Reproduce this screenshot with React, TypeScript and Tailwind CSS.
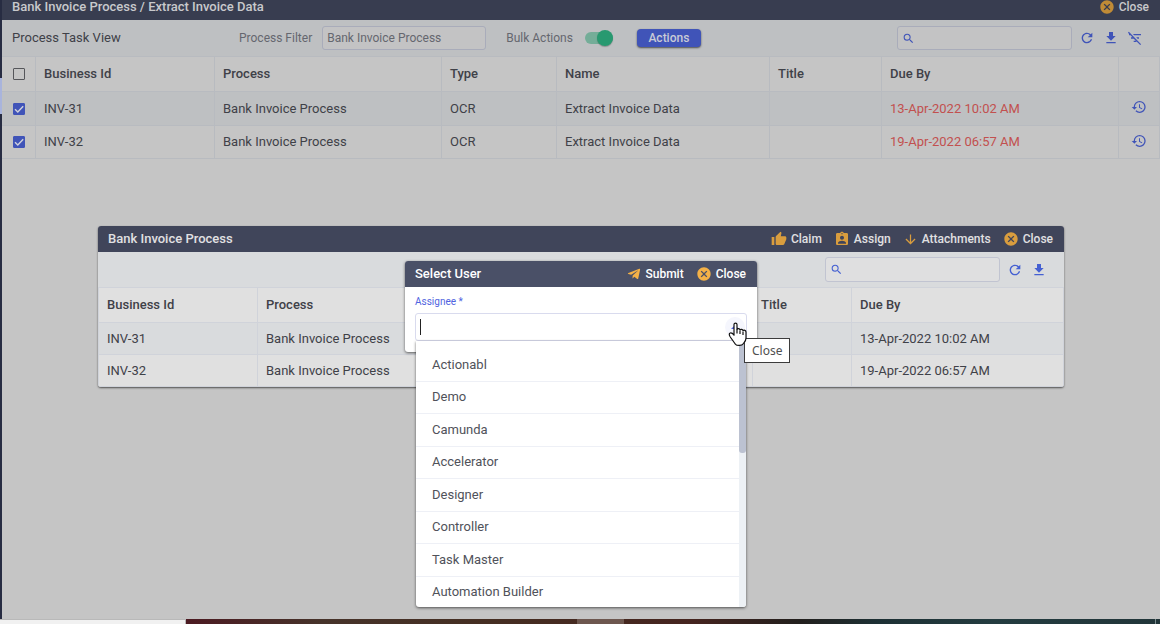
import type { ReactNode } from "react";
import {
  MdArrowDownward,
  MdAssignmentInd,
  MdCancel,
  MdFileDownload,
  MdFilterListOff,
  MdHistory,
  MdRefresh,
  MdSearch,
  MdThumbUp,
} from "react-icons/md";
import { FaTelegramPlane } from "react-icons/fa";

const tasks = [
  { id: "INV-31", process: "Bank Invoice Process", type: "OCR", name: "Extract Invoice Data", due: "13-Apr-2022 10:02 AM" },
  { id: "INV-32", process: "Bank Invoice Process", type: "OCR", name: "Extract Invoice Data", due: "19-Apr-2022 06:57 AM" },
];

const users = [
  "Actionabl",
  "Demo",
  "Camunda",
  "Accelerator",
  "Designer",
  "Controller",
  "Task Master",
  "Automation Builder",
];

function BarButton({ icon, children }: { icon: ReactNode; children: ReactNode }) {
  return (
    <button type="button" className="flex items-center gap-1 text-[12px] leading-4 font-medium">
      {icon}
      {children}
    </button>
  );
}

function RowCheckbox({ label, checked = false }: { label: string; checked?: boolean }) {
  return (
    <span className="mx-auto grid size-3 place-items-center">
      <input
        type="checkbox"
        aria-label={label}
        defaultChecked={checked}
        className="peer col-start-1 row-start-1 size-3 appearance-none rounded-[1px] border border-[#55565a] checked:border-[#4054b8] checked:bg-[#4054b8]"
      />
      <svg viewBox="0 0 12 12" className="pointer-events-none col-start-1 row-start-1 hidden size-3 peer-checked:block" aria-hidden="true">
        <path d="M2 6.2 4.8 9 10.2 3.2" fill="none" stroke="#d0d2dc" strokeWidth="1.4" />
      </svg>
    </span>
  );
}

function MainTable() {
  const cell = "border-r border-b border-[#b8bbc0] px-2";
  return (
    <table className="w-full table-fixed border-separate border-spacing-0 text-left">
      <colgroup>
        <col className="w-[34px]" />
        <col className="w-[179px]" />
        <col className="w-[227px]" />
        <col className="w-[115px]" />
        <col className="w-[213px]" />
        <col className="w-[112px]" />
        <col className="w-[237px]" />
        <col className="w-[41px]" />
      </colgroup>
      <thead>
        <tr className="h-[35px]">
          <th className="border-r border-b border-[#b8bbc0]">
            <RowCheckbox label="Select all tasks" />
          </th>
          {["Business Id", "Process", "Type", "Name", "Title", "Due By"].map((h) => (
            <th key={h} className={`${cell} font-medium`}>{h}</th>
          ))}
          <th className={cell} />
        </tr>
      </thead>
      <tbody>
        {tasks.map((t) => (
          <tr key={t.id} className="h-[34px] odd:bg-[#bec0c2] last:h-[33px]">
            <td className="border-r border-b border-[#b8bbc0]">
              <RowCheckbox label={`Select ${t.id}`} checked />
            </td>
            <td className={cell}>{t.id}</td>
            <td className={cell}>{t.process}</td>
            <td className={cell}>{t.type}</td>
            <td className={cell}>{t.name}</td>
            <td className={cell} />
            <td className={`${cell} text-[#c2504f]`}>{t.due}</td>
            <td className="border-r border-b border-[#b8bbc0] pb-[3px]">
              <button type="button" aria-label={`History of ${t.id}`} className="mx-auto block text-[#4054b8]">
                <MdHistory size={16} />
              </button>
            </td>
          </tr>
        ))}
      </tbody>
    </table>
  );
}

function ClaimDialog() {
  const cell = "border-r border-b border-[#d0d3da] px-2";
  return (
    <section className="w-[966px] max-w-full overflow-hidden rounded-[3px] bg-[#e0e0e0] shadow-[0_1px_2px_rgba(0,0,0,0.6)]">
      <header className="flex h-[26px] items-center justify-between bg-[#40455a] pr-[11px] pl-2.5 text-[#e0e0e2]">
        <h2 className="font-medium">Bank Invoice Process</h2>
        <div className="flex items-center gap-3">
          <BarButton icon={<MdThumbUp size={16} className="text-[#d99d3e]" />}>Claim</BarButton>
          <BarButton icon={<MdAssignmentInd size={16} className="text-[#d99d3e]" />}>Assign</BarButton>
          <BarButton icon={<MdArrowDownward size={15} className="text-[#d99d3e]" />}>Attachments</BarButton>
          <BarButton icon={<MdCancel size={16} className="text-[#d99d3e]" />}>Close</BarButton>
        </div>
      </header>
      <div className="flex h-[35px] items-center justify-end gap-2 bg-[#d9dbdd] pr-[17px] text-[#4560d2]">
        <label className="-mr-px flex h-[25px] w-[175px] items-center rounded-[3px] border border-[#c1c4d1] bg-[#dfdfe0] px-1">
          <MdSearch size={13} />
          <input type="search" aria-label="Search invoices" className="min-w-0 flex-1 outline-none" />
        </label>
        <button type="button" aria-label="Refresh invoices"><MdRefresh size={16} /></button>
        <button type="button" aria-label="Download invoices"><MdFileDownload size={16} /></button>
      </div>
      <table className="w-full table-fixed border-separate border-spacing-0 border-t border-l border-[#d0d3da] text-left">
        <colgroup>
          <col className="w-[159px]" />
          <col className="w-[495px]" />
          <col className="w-[99px]" />
          <col className="w-[212px]" />
        </colgroup>
        <thead>
          <tr className="h-[35px]">
            {["Business Id", "Process", "Title", "Due By"].map((h) => (
              <th key={h} className={`${cell} font-medium`}>{h}</th>
            ))}
          </tr>
        </thead>
        <tbody>
          {tasks.map((t) => (
            <tr key={t.id} className="h-8 odd:bg-[#d9dbdd]">
              <td className={cell}>{t.id}</td>
              <td className={cell}>{t.process}</td>
              <td className={cell} />
              <td className={cell}>{t.due}</td>
            </tr>
          ))}
        </tbody>
      </table>
    </section>
  );
}

function HandCursor() {
  return (
    <svg viewBox="0 0 19 25" className="absolute -top-0.5 -left-1.5 h-[25px] w-[19px]" aria-hidden="true">
      <path
        d="M6 2.5C6 .6 9 .6 9 2.5V7.500c.5-1.300 2.700-1 3 .5.7-1.200 2.600-.8 3 .7 1-1 3-.4 3 1.300V16c0 3.500-2 4.500-3 6-1 1.800-6 2-7.500.3C6 20.500 4.500 18 2 14.500c-1.200-2-.8-3.200.3-3.500 1.300-.3 2.500.6 3.700 2.200Z"
        fill="#fff"
        stroke="#111"
        strokeWidth="1.200"
        strokeLinejoin="round"
      />
      <path d="M9 7.500v4M12 8.500v3.500M15 9.500V13" stroke="#111" strokeWidth="1.200" fill="none" />
    </svg>
  );
}

function SelectUserDialog() {
  return (
    <section className="w-[352px] rounded-[3px] bg-white shadow-[0_1px_3px_rgba(0,0,0,0.6)]">
      <header className="flex h-[26px] items-center justify-between rounded-t-[3px] bg-[#4a5067] pr-[11px] pl-2.5 text-white">
        <h2 className="font-medium">Select User</h2>
        <div className="flex items-center gap-3">
          <BarButton icon={<FaTelegramPlane size={14} className="text-[#f4b147]" />}>Submit</BarButton>
          <BarButton icon={<MdCancel size={16} className="text-[#f4b147]" />}>Close</BarButton>
        </div>
      </header>
      <div className="px-2.5 pt-[9px] pb-[11px]">
        <label htmlFor="assignee" className="block text-[10px] leading-3 text-[#4f63e0]">Assignee *</label>
        <div className="relative mt-[5px] flex h-7 items-center rounded-[3px] border border-[#d9dbee] pr-px">
          <span className="ml-1 h-4 w-px bg-[#222]" />
          <input id="assignee" type="text" role="combobox" aria-expanded="true" aria-controls="user-list" className="min-w-0 flex-1 caret-transparent outline-none" />
          <button type="button" aria-label="Close user list" className="grid size-5 place-items-center rounded-full bg-[#f5f6fd]">
            <svg viewBox="0 0 8 4" className="h-1 w-2" aria-hidden="true">
              <path d="M0 4 4 0l4 4Z" fill="#4f63e0" />
            </svg>
          </button>

          <div className="absolute top-[27px] right-0 left-0 flex h-[266px] overflow-hidden rounded-b-[3px] bg-white shadow-[0_1px_3px_rgba(0,0,0,0.6)]">
            <ul id="user-list" role="listbox" className="mt-2 flex h-[260px] flex-1 flex-col">
              {users.map((u) => (
                <li key={u} role="option" aria-selected="false" className="flex flex-1 items-center border-b border-[#eef0f6] px-4 text-[#50525a]">
                  {u}
                </li>
              ))}
            </ul>
            <div className="w-[7px] bg-[#edf1f5]">
              <div className="h-28 rounded-b-[3px] bg-[#bcc2d1]" />
            </div>
          </div>

          <div className="absolute top-2.5 right-0 size-3">
            <div role="tooltip" className="absolute top-[14px] left-[10px] border border-[#3c3c3c] bg-white px-[7px] py-[3px] font-['Noto_Sans',sans-serif] text-[12px] leading-[17px] text-[#505050]">
              Close
            </div>
            <HandCursor />
          </div>
        </div>
      </div>
    </section>
  );
}

export default function App() {
  return (
    <div className="flex min-h-screen flex-col bg-[#c5c5c5] font-[Roboto,sans-serif] text-[13px] leading-4 text-[#3f4148]">
      <div className="flex flex-1">
        <div className="flex w-0.5 flex-col bg-[#272c42]">
          <div className="mt-[78px] h-9 bg-[#a9b4dc]" />
        </div>
        <main className="relative min-w-0 flex-1">
          <header className="flex h-5 items-center justify-between bg-[#383d50] pr-[11px] pb-1.5 pl-2.5 text-[#c8c9cc]">
            <h1 className="font-medium">Bank Invoice Process / Extract Invoice Data</h1>
            <BarButton icon={<MdCancel size={16} className="text-[#c08b36]" />}>Close</BarButton>
          </header>

          <div className="flex h-[37px] items-center border-b border-[#b8bbc0] bg-[#bec0c2] pr-[17px] pl-2.5">
            <h2 className="w-[227px]">Process Task View</h2>
            <div className="flex items-center gap-2.5 text-[12px] text-[#65676f]">
              <label htmlFor="process-filter">Process Filter</label>
              <input id="process-filter" type="text" defaultValue="Bank Invoice Process" className="h-6 w-[164px] rounded-[3px] border border-[#a9acba] bg-[#c3c3c4] px-1 outline-none" />
            </div>
            <label className="ml-5 flex items-center gap-3 text-[12px] text-[#65676f]">
              Bulk Actions
              <span className="flex h-3 w-7 items-center justify-end rounded-full bg-[#74ad98]">
                <input type="checkbox" role="switch" defaultChecked className="size-4 appearance-none rounded-full bg-[#289970] shadow-[0_1px_1px_rgba(0,0,0,0.25)]" />
              </span>
            </label>
            <button type="button" className="ml-6 h-[18px] w-16 rounded-[4px] bg-[#4054b8] text-[12px] leading-4 font-medium text-[#c9cbd6] shadow-[0_1px_2px_rgba(0,0,0,0.6)]">
              Actions
            </button>
            <div className="ml-auto flex items-center gap-2 text-[#4054b8]">
              <label className="-mr-px flex h-6 w-[175px] items-center rounded-[3px] border border-[#a9acba] bg-[#c3c3c4] px-1">
                <MdSearch size={13} />
                <input type="search" aria-label="Search tasks" className="min-w-0 flex-1 outline-none" />
              </label>
              <button type="button" aria-label="Refresh tasks"><MdRefresh size={16} /></button>
              <button type="button" aria-label="Download tasks"><MdFileDownload size={16} /></button>
              <button type="button" aria-label="Clear filters"><MdFilterListOff size={16} className="scale-y-100" /></button>
            </div>
          </div>

          <MainTable />

          <div className="absolute inset-x-0 top-[226px] flex justify-center">
            <ClaimDialog />
          </div>
          <div className="absolute inset-x-0 top-[261px] flex justify-center">
            <SelectUserDialog />
          </div>
        </main>
      </div>
      <footer className="flex h-[5px]">
        <div className="w-[186px] border-t border-r border-[#b9b9b9] bg-[#f1f1f1]" />
        <div className="flex flex-1 bg-[linear-gradient(to_right,#4c1a22_0%,#46332a_14%,#452e22_31%,#45241f_52%,#221f1d_63%,#1d3034_71%,#243c40_83%,#213539_100%)]">
          <div className="ml-[391px] w-[47px] bg-[#6d574f]" />
          <div className="mr-1 ml-auto w-px bg-[#7b8c8e]" />
        </div>
      </footer>
    </div>
  );
}
